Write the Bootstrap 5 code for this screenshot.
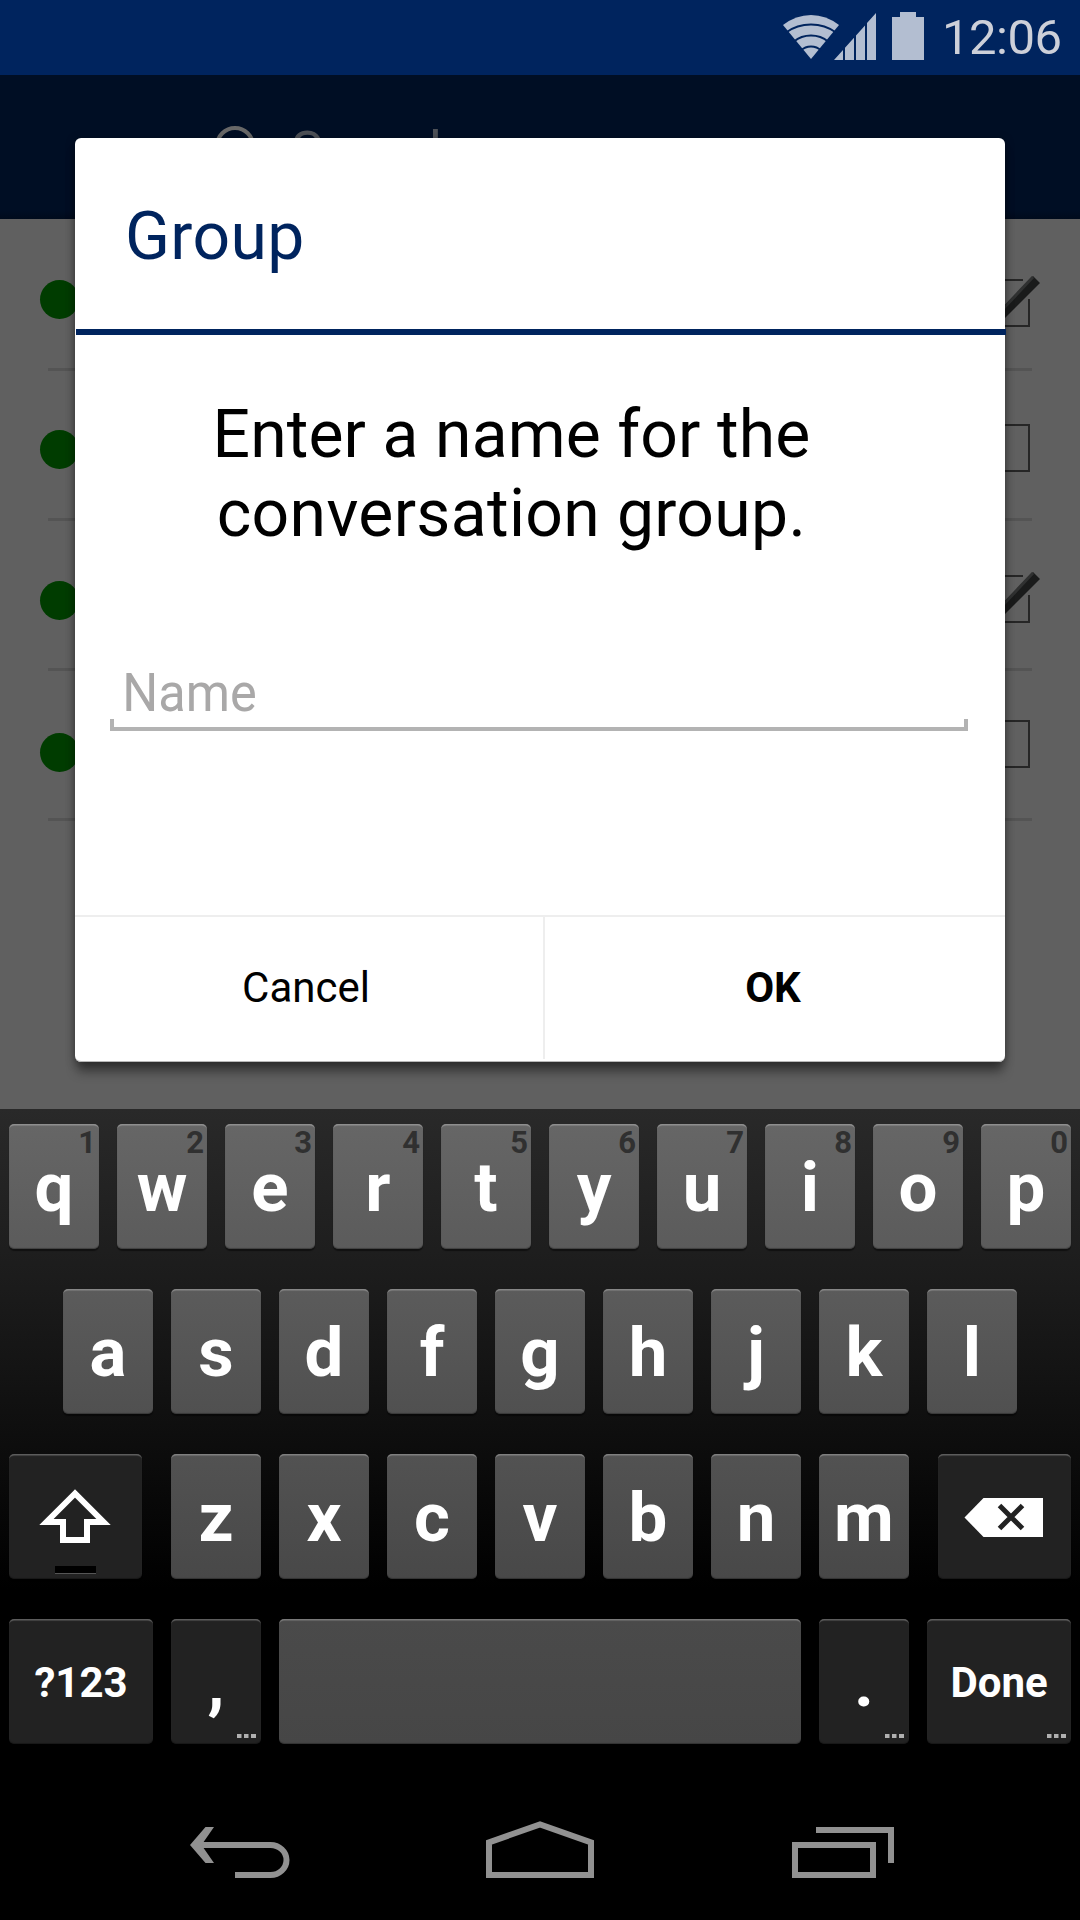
<!DOCTYPE html>
<html lang="en">
<head>
<meta charset="utf-8">
<meta name="viewport" content="width=device-width, initial-scale=1">
<title>Group</title>
<link href="https://cdn.jsdelivr.net/npm/bootstrap@5.3.0/dist/css/bootstrap.min.css" rel="stylesheet">
<style>
html,body{margin:0;background:#000}
body{font-family:Roboto,"Noto Sans",sans-serif;width:1080px;height:1920px;overflow:hidden}
svg{display:block}
.status{height:75px;background:#00245e;color:#cdd0d9;padding-right:17px}
.clock{font-size:49px;line-height:1;letter-spacing:-.5px;width:121px;margin-left:-4px;white-space:nowrap}
.appbar{height:144px;background:linear-gradient(#000e24 94%,#000b1c);padding:49px 0 0 214px}
.query{font-size:54px;line-height:54px;color:#4e5157;margin-left:35px;letter-spacing:.4px}
.contacts{height:890px;background:#606060}
.contact{height:150px;margin:0 48px;border-bottom:3px solid #545454}
.contact:first-child{height:152px}
.presence{width:39px;height:39px;background:#003c00;margin-left:-8px}
.contact .tick{margin-right:-8px}
/* dialog */
.dialog{left:75px;top:138px;width:930px;height:924px;background:#fff;border-radius:6px;box-shadow:0 2px 10px rgba(0,0,0,.35),0 12px 11px -2px rgba(0,0,0,.38)}
.dlg-title{height:191px;padding:6px 0 0 50px;font-size:66px;color:#00245e;letter-spacing:.4px}
.dlg-rule{height:6px;background:#00245e;margin:0 -1px 0 1px}
.dlg-text{margin:60px 57px 101px 0;font-size:66px;line-height:79px;color:#000;letter-spacing:.35px}
.dlg-text .first{letter-spacing:.12px}
.field{margin:0 37px 0 35px;height:77px}
.field::after{content:"";position:absolute;inset:auto 0 0 0;height:12px;border:4px solid #b3b3b3;border-top:0;pointer-events:none}
.field .form-control{height:77px;font-size:54px;padding:0 0 0 13px;color:#000;border-radius:0;transform:scaleX(.935);transform-origin:0 50%}
.field .form-control::placeholder{color:#a9a8a8;opacity:1}
.dlg-foot{height:147px;border-top:2px solid #eee;border-bottom:1px solid #b8b8b8;border-radius:0 0 6px 6px}
.dlg-foot .btn{font-size:42px;color:#000;border:0;border-radius:0;padding:0 0 4px}
.dlg-foot .btn-cancel{width:468px;padding-right:6px}
.dlg-foot .btn-ok{padding-right:4px}
.dlg-foot .split{width:2px;background:#eee;margin-bottom:2px}
/* keyboard */
.keyboard{height:667px;padding:15px 9px 0;gap:40px;background:linear-gradient(#292929,#1b1b1b 180px,#0e0e0e 325px,#000 480px)}
.keys{gap:18px;height:125px}
.kkey{width:90px;height:125px;flex:none;padding-top:2px;border-radius:5px;color:#fff;font-weight:700;font-size:69px;line-height:1;box-shadow:inset 0 2px 1px -0.5px rgba(255,255,255,.28),inset 0 -1px 1px rgba(0,0,0,.3),0 2px 1px rgba(0,0,0,.45)}
.r1 .kkey{background:linear-gradient(#666,#5b5b5b)}
.r2 .kkey{background:linear-gradient(#5b5b5b,#505050)}
.r3 .kkey{background:linear-gradient(#525252,#484848)}
.r4 .kkey{background:linear-gradient(#4a4a4a,#464646)}
.keys .fn{background:#222}
.wide{width:133px}
.wider{width:144px;font-size:42px}
.hint{top:3px;right:3px;font-size:31px;line-height:32px;color:#303030}
.more{right:5px;bottom:6px}
.lock{left:46px;bottom:5px;width:41px;height:8px;background:#000;border-bottom:1px solid #555}
.navkeys{height:144px;background:#000;padding:0 186px}
</style>
</head>
<body class="d-flex flex-column position-relative">
<header class="status d-flex align-items-center justify-content-end flex-shrink-0">
  <svg width="163" height="75" viewBox="783 0 163 75" fill="#b3bed1">
    <path d="M783 25Q796 15 811 15Q826 15 839 25L811 59Z"/>
    <g fill="none" stroke="#00245e" stroke-width="2"><path d="M786 32.500Q797 24.500 811 24.500Q825 24.500 836 32.500"/><path d="M794 41.500Q801 35.500 811 35.500Q821 35.500 828 41.500"/><path d="M801 50.500Q805 46.500 811 46.500Q817 46.500 821 50.500"/></g>
    <path d="M834 60L843 50V60ZM845 47.700L854 37.700V60H845ZM856 35.500L865 25.500V60H856ZM867 23L876 13V60H867Z"/>
    <path d="M892 17H900V12H916V17H924V60H892Z"/>
  </svg>
  <span class="clock">12:06</span>
</header>

<div class="appbar d-flex align-items-start flex-shrink-0">
  <svg width="42" height="50" viewBox="0 -1 42 50" fill="none" stroke="#686868" stroke-width="4"><circle cx="21" cy="21" r="18"/><path d="M32 35L41 48"/></svg>
  <span class="query">Search</span>
</div>

<main class="contacts flex-shrink-0">
  <div class="contact d-flex align-items-start justify-content-between">
    <span class="presence rounded-circle" style="margin-top:61px"></span>
    <svg class="tick" style="margin-top:56px" width="60" height="55" viewBox="0 0 60 55"><path d="M43 5H2V51H49V24" fill="none" stroke="#262626" stroke-width="2"/><path d="M2 31L9 25L21 34L53 1L60 8L22 46Z" fill="#1a1b1b"/><path d="M21 36L53 2" stroke="#303131" stroke-width="3"/></svg>
  </div>
  <div class="contact d-flex align-items-start justify-content-between">
    <span class="presence rounded-circle" style="margin-top:59px"></span>
    <svg class="tick" style="margin-top:49px" width="60" height="55" viewBox="0 0 60 55"><path d="M2 5H49V51H2Z" fill="none" stroke="#262626" stroke-width="2"/></svg>
  </div>
  <div class="contact d-flex align-items-start justify-content-between">
    <span class="presence rounded-circle" style="margin-top:60px"></span>
    <svg class="tick" style="margin-top:50px" width="60" height="55" viewBox="0 0 60 55"><path d="M43 5H2V51H49V24" fill="none" stroke="#262626" stroke-width="2"/><path d="M2 31L9 25L21 34L53 1L60 8L22 46Z" fill="#1a1b1b"/><path d="M21 36L53 2" stroke="#303131" stroke-width="3"/></svg>
  </div>
  <div class="contact d-flex align-items-start justify-content-between">
    <span class="presence rounded-circle" style="margin-top:62px"></span>
    <svg class="tick" style="margin-top:45px" width="60" height="55" viewBox="0 0 60 55"><path d="M2 5H49V51H2Z" fill="none" stroke="#262626" stroke-width="2"/></svg>
  </div>
</main>

<section class="keyboard d-flex flex-column flex-shrink-0">
  <div class="keys r1 d-flex">
    <div class="kkey position-relative d-flex align-items-center justify-content-center">q<span class="hint position-absolute">1</span></div>
    <div class="kkey position-relative d-flex align-items-center justify-content-center">w<span class="hint position-absolute">2</span></div>
    <div class="kkey position-relative d-flex align-items-center justify-content-center">e<span class="hint position-absolute">3</span></div>
    <div class="kkey position-relative d-flex align-items-center justify-content-center">r<span class="hint position-absolute">4</span></div>
    <div class="kkey position-relative d-flex align-items-center justify-content-center">t<span class="hint position-absolute">5</span></div>
    <div class="kkey position-relative d-flex align-items-center justify-content-center">y<span class="hint position-absolute">6</span></div>
    <div class="kkey position-relative d-flex align-items-center justify-content-center">u<span class="hint position-absolute">7</span></div>
    <div class="kkey position-relative d-flex align-items-center justify-content-center">i<span class="hint position-absolute">8</span></div>
    <div class="kkey position-relative d-flex align-items-center justify-content-center">o<span class="hint position-absolute">9</span></div>
    <div class="kkey position-relative d-flex align-items-center justify-content-center">p<span class="hint position-absolute">0</span></div>
  </div>
  <div class="keys r2 d-flex justify-content-center">
    <div class="kkey d-flex align-items-center justify-content-center">a</div>
    <div class="kkey d-flex align-items-center justify-content-center">s</div>
    <div class="kkey d-flex align-items-center justify-content-center">d</div>
    <div class="kkey d-flex align-items-center justify-content-center">f</div>
    <div class="kkey d-flex align-items-center justify-content-center">g</div>
    <div class="kkey d-flex align-items-center justify-content-center">h</div>
    <div class="kkey d-flex align-items-center justify-content-center">j</div>
    <div class="kkey d-flex align-items-center justify-content-center">k</div>
    <div class="kkey d-flex align-items-center justify-content-center">l</div>
  </div>
  <div class="keys r3 d-flex justify-content-between">
    <div class="kkey fn wide position-relative">
      <svg width="133" height="123" viewBox="9 1456 133 123" fill="none" stroke="#fff" stroke-width="6"><path d="M75 1493.500L46.500 1522H63V1540H87V1522H103.500Z"/></svg>
      <span class="lock position-absolute"></span>
    </div>
    <div class="keys d-flex">
      <div class="kkey d-flex align-items-center justify-content-center">z</div>
      <div class="kkey d-flex align-items-center justify-content-center">x</div>
      <div class="kkey d-flex align-items-center justify-content-center">c</div>
      <div class="kkey d-flex align-items-center justify-content-center">v</div>
      <div class="kkey d-flex align-items-center justify-content-center">b</div>
      <div class="kkey d-flex align-items-center justify-content-center">n</div>
      <div class="kkey d-flex align-items-center justify-content-center">m</div>
    </div>
    <div class="kkey fn wide">
      <svg width="133" height="123" viewBox="938 1456 133 123"><path d="M964.500 1517.500L983.500 1498H1043V1537H983.500Z" fill="#fff"/><path d="M999.500 1505.500L1022.500 1528.500M1022.500 1505.500L999.500 1528.500" stroke="#222" stroke-width="5"/></svg>
    </div>
  </div>
  <div class="keys r4 d-flex">
    <div class="kkey fn wider d-flex align-items-center justify-content-center">?123</div>
    <div class="kkey fn position-relative d-flex align-items-center justify-content-center">,<svg class="more position-absolute" width="19" height="4" fill="#b0b0b0"><path d="M0 0h4.500v4H0zM7 0h4.500v4H7zM14 0h5v4h-5z"/></svg></div>
    <div class="kkey flex-fill"></div>
    <div class="kkey fn position-relative d-flex align-items-center justify-content-center">.<svg class="more position-absolute" width="19" height="4" fill="#b0b0b0"><path d="M0 0h4.500v4H0zM7 0h4.500v4H7zM14 0h5v4h-5z"/></svg></div>
    <div class="kkey fn wider position-relative d-flex align-items-center justify-content-center">Done<svg class="more position-absolute" width="19" height="4" fill="#b0b0b0"><path d="M0 0h4.500v4H0zM7 0h4.500v4H7zM14 0h5v4h-5z"/></svg></div>
  </div>
</section>

<nav class="navkeys d-flex justify-content-between flex-shrink-0">
  <svg width="108" height="144" viewBox="186 1776 108 144"><path d="M198 1845H270.500A16 15 0 0 1 270.500 1875H235" fill="none" stroke="#919191" stroke-width="6"/><path d="M205.500 1827H214L201.500 1845L214 1863H205.500L190 1845Z" fill="#919191"/></svg>
  <svg width="108" height="144" viewBox="486 1776 108 144" fill="none" stroke="#919191" stroke-width="6"><path d="M489 1875V1842.300L540 1824.500L591 1842.300V1875Z"/></svg>
  <svg width="108" height="144" viewBox="786 1776 108 144" fill="none" stroke="#919191" stroke-width="6"><path d="M795 1845H873V1875H795ZM816 1830H891V1863"/></svg>
</nav>

<div class="dialog position-absolute d-flex flex-column" role="dialog">
  <div class="dlg-title d-flex align-items-center">Group</div>
  <div class="dlg-rule"></div>
  <p class="dlg-text text-center"><span class="first">Enter a name for the</span><br>conversation group.</p>
  <div class="field position-relative"><input class="form-control border-0 bg-transparent shadow-none" type="text" placeholder="Name"></div>
  <div class="dlg-foot d-flex mt-auto">
    <button class="btn btn-cancel" type="button">Cancel</button>
    <span class="split"></span>
    <button class="btn btn-ok flex-fill fw-bold" type="button">OK</button>
  </div>
</div>
<script src="https://cdn.jsdelivr.net/npm/bootstrap@5.3.0/dist/js/bootstrap.bundle.min.js"></script>
</body>
</html>
